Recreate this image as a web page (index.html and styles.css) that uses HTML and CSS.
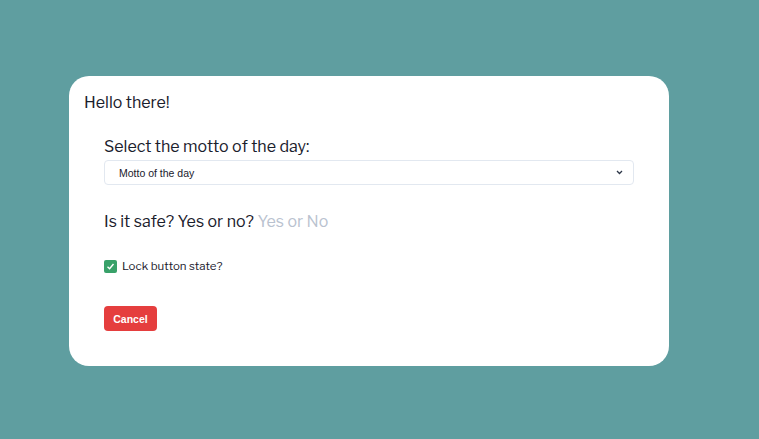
FILE: index.html
```html
<!DOCTYPE html>
<html>
<head>
<meta charset="utf-8">
<link rel="stylesheet" href="styles.css">
</head>
<body>
<div class="page">
  <div class="card">
    <h1 class="greet">Hello there!</h1>
    <div class="form">
      <label class="label">Select the motto of the day:</label>
      <div class="select">
        <span class="select-text">Motto of the day</span>
        <svg class="chev" width="7" height="5" viewBox="0 0 7 5"><path d="M1 1 L3.5 3.5 L6 1" fill="none" stroke="#2d3748" stroke-width="1.3"/></svg>
      </div>
      <div class="question">Is it safe? Yes or no? <span class="hint">Yes or No</span></div>
      <div class="check-row">
        <span class="checkbox"><svg width="9" height="9" viewBox="0 0 9 9"><path d="M1.5 4.8 L3.6 6.8 L7.5 2" fill="none" stroke="#fff" stroke-width="1.4"/></svg></span>
        <span class="check-label">Lock button state?</span>
      </div>
      <div><button class="btn">Cancel</button></div>
    </div>
  </div>
</div>
</body>
</html>
```
FILE: styles.css
```css
html, body { margin: 0; padding: 0; }
body {
  background: #5f9ea0;
  width: 759px;
  height: 439px;
  font-family: "Libre Franklin", "Inter", "Liberation Sans", sans-serif;
  color: #1a202c;
}
.page {
  padding: 76px 0 0 69px;
}
.card {
  box-sizing: border-box;
  width: 600px;
  height: 290px;
  background: #fff;
  border-radius: 20px;
  padding: 16px 15px;
}
.greet {
  margin: 0;
  font-size: 16px;
  font-weight: 400;
  line-height: 22px;
}
.form {
  padding: 0 20px;
  margin-top: 24px;
}
.label {
  display: block;
  font-size: 16px;
  line-height: 18px;
}
.select {
  margin-top: 4px;
  box-sizing: border-box;
  height: 25px;
  border: 1px solid #e2e8f0;
  border-radius: 4px;
  display: flex;
  align-items: center;
  justify-content: space-between;
  padding: 0 10px 0 14px;
}
.select-text {
  font-family: "Liberation Sans", Arial, sans-serif;
  font-size: 10.5px;
  color: #1a202c;
}
.question {
  margin-top: 27px;
  font-size: 16px;
  line-height: 20px;
}
.hint { color: #b9c2cf; }
.check-row {
  margin-top: 27px;
  display: flex;
  align-items: center;
  gap: 5px;
}
.checkbox {
  width: 13px;
  height: 13px;
  background: #38a169;
  border-radius: 2px;
  display: flex;
  align-items: center;
  justify-content: center;
}
.check-label {
  font-size: 11.5px;
}
.btn {
  margin-top: 33px;
  background: #e53e3e;
  color: #fff;
  border: none;
  border-radius: 4px;
  font-family: "Liberation Sans", Arial, sans-serif;
  font-weight: 700;
  font-size: 10.5px;
  width: 53px;
  height: 25px;
  padding: 0;
}
```
